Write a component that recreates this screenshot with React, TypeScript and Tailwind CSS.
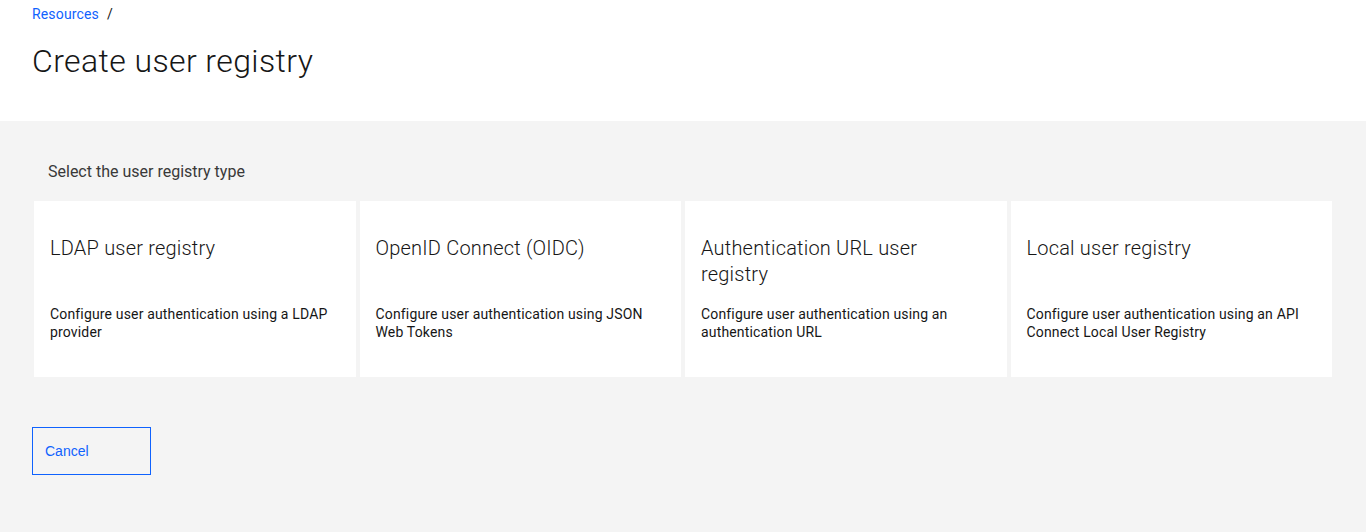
const cards = [
  {
    title: "LDAP user registry",
    desc: "Configure user authentication using a LDAP provider",
  },
  {
    title: "OpenID Connect (OIDC)",
    desc: "Configure user authentication using JSON Web Tokens",
  },
  {
    title: "Authentication URL user registry",
    desc: "Configure user authentication using an authentication URL",
  },
  {
    title: "Local user registry",
    desc: "Configure user authentication using an API Connect Local User Registry",
  },
];

export default function App() {
  return (
    <div className="flex min-h-[532px] flex-col bg-[#f4f4f4] font-['Roboto',sans-serif] text-[#161616]">
      <header className="h-[121px] bg-white px-8 pt-[5px]">
        <nav className="flex items-center gap-2 text-sm leading-[18px] tracking-[0.16px]">
          <a href="#" className="text-[#0f62fe]">
            Resources
          </a>
          <span className="text-[#161616]">/</span>
        </nav>
        <h1 className="mt-[18px] text-[32px] leading-[40px] font-light tracking-[0.4px]">
          Create user registry
        </h1>
      </header>

      <main className="flex-1 px-[34px] pt-[42px]">
        <p className="px-[14px] text-base leading-[18px] text-[#393939]">
          Select the user registry type
        </p>
        <div className="mt-[20px] grid grid-cols-4 gap-1">
          {cards.map((c) => (
            <div
              key={c.title}
              className="h-[176px] cursor-pointer bg-white px-4 pt-[34px]"
            >
              <h2 className="h-[52px] pr-8 text-xl leading-[26px] font-light tracking-[0.2px]">
                {c.title}
              </h2>
              <p className="mt-[18px] text-sm leading-[18px] tracking-[0.16px] text-[#161616]">
                {c.desc}
              </p>
            </div>
          ))}
        </div>
        <button className="mt-[50px] -ml-[2px] flex h-[48px] w-[119px] items-center border border-[#0f62fe] px-3 font-['Liberation_Sans',sans-serif] text-sm text-[#0f62fe]">
          Cancel
        </button>
      </main>
    </div>
  );
}
